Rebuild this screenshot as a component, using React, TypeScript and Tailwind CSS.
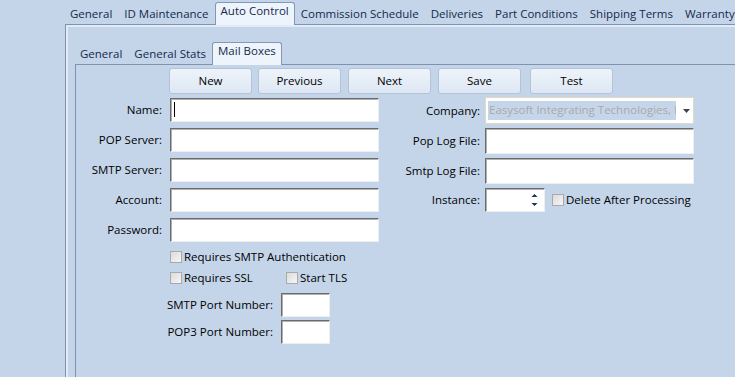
import React from "react";

const Tab = ({ label, active }: { label: string; active?: boolean }) =>
  active ? (
    <div className="relative z-10 -mb-px flex h-[23px] items-start rounded-t-[3px] border border-b-0 border-[#8497b4] bg-[#eef4fb] px-[5px] pt-[2px] text-[#15294b]">
      {label}
    </div>
  ) : (
    <div className="flex h-[21px] items-center px-[6px] text-[#15294b]">{label}</div>
  );

const Btn = ({ label, w, ml }: { label: string; w: string; ml: string }) => (
  <div
    className={`${w} ${ml} flex h-[26px] items-center justify-center rounded-[3px] border border-[#b4c3d8] bg-gradient-to-b from-[#eef3fa] to-[#dde7f4] text-black`}
  >
    {label}
  </div>
);

const Input = ({ w, h }: { w: string; h: string }) => (
  <div
    className={`${w} ${h} border border-t-[#6b6b6b] border-l-[#6b6b6b] border-b-[#eeeeee] border-r-[#eeeeee] bg-white shadow-[inset_1px_1px_0_#b0b0b0]`}
  />
);

const Check = ({ label, className = "" }: { label: string; className?: string }) => (
  <div className={`flex items-center ${className}`}>
    <div className="h-[12px] w-[12px] border border-[#a9a9a9] bg-gradient-to-br from-[#dcdcdc] to-[#f6f6f6]" />
    <span className="ml-[2px] text-black">{label}</span>
  </div>
);

export default function App() {
  const leftRows = ["Name:", "POP Server:", "SMTP Server:", "Account:", "Password:"];
  return (
    <div className="h-[377px] w-[735px] overflow-hidden bg-[#c4d5ea] font-['Open_Sans','Noto_Sans',sans-serif] text-[11.5px] leading-none">
      {/* outer tabs */}
      <div className="flex h-[24px] items-end whitespace-nowrap pl-[64px]">
        <Tab label="General" />
        <Tab label="ID Maintenance" />
        <Tab label="Auto Control" active />
        <Tab label="Commission Schedule" />
        <Tab label="Deliveries" />
        <Tab label="Part Conditions" />
        <Tab label="Shipping Terms" />
        <Tab label="Warranty" />
      </div>
      {/* outer panel */}
      <div className="ml-[65px] h-[353px] border-l border-t border-[#7f93b1] shadow-[inset_2px_2px_0_#e1eaf6]">
        <div className="flex h-[39px] items-end whitespace-nowrap pl-[8px]">
          <Tab label="General" />
          <Tab label="General Stats" />
          <Tab label="Mail Boxes" active />
        </div>
        {/* inner panel */}
        <div className="ml-[9px] h-[320px] border-l border-t border-[#7f93b1] pt-[3px]">
          <div className="flex">
            <Btn label="New" w="w-[83px]" ml="ml-[93px]" />
            <Btn label="Previous" w="w-[83px]" ml="ml-[6px]" />
            <Btn label="Next" w="w-[83px]" ml="ml-[7px]" />
            <Btn label="Save" w="w-[83px]" ml="ml-[7px]" />
            <Btn label="Test" w="w-[83px]" ml="ml-[9px]" />
          </div>
          <div className="flex">
            {/* left column */}
            <div className="flex flex-col pt-[4px]">
              {leftRows.map((l) => (
                <div key={l} className="mb-[6px] flex items-center">
                  <div className="w-[86px] text-right text-black">{l}</div>
                  <div className="ml-[8px]">
                    {l === "Name:" ? (
                      <div className="relative h-[24px] w-[209px] border border-t-[#6b6b6b] border-l-[#6b6b6b] border-b-[#eeeeee] border-r-[#eeeeee] bg-white shadow-[inset_1px_1px_0_#b0b0b0]">
                        <div className="absolute left-[3px] top-[3px] h-[15px] w-px bg-black" />
                      </div>
                    ) : (
                      <Input w="w-[209px]" h="h-[24px]" />
                    )}
                  </div>
                </div>
              ))}
              <div className="ml-[94px] mt-[1px] flex flex-col">
                <Check label="Requires SMTP Authentication" className="h-[16px]" />
                <div className="mt-[5px] flex h-[16px]">
                  <Check label="Requires SSL" className="w-[116px]" />
                  <Check label="Start TLS" />
                </div>
              </div>
              <div className="mt-[7px] flex items-center">
                <div className="w-[197px] text-right text-black">SMTP Port Number:</div>
                <div className="ml-[8px]">
                  <Input w="w-[49px]" h="h-[24px]" />
                </div>
              </div>
              <div className="mt-[3px] flex items-center">
                <div className="w-[197px] text-right text-black">POP3 Port Number:</div>
                <div className="ml-[8px]">
                  <Input w="w-[49px]" h="h-[24px]" />
                </div>
              </div>
            </div>
            {/* right column */}
            <div className="flex flex-col pt-[3px]">
              <div className="flex items-center">
                <div className="w-[101px] text-right text-black">Company:</div>
                <div className="ml-[5px] flex h-[27px] w-[209px] items-center border border-[#dedac6] bg-white pl-[2px]">
                  <div className="h-[19px] w-[188px] overflow-hidden whitespace-nowrap bg-[#c6d6ea] pl-[1px] pt-[3px] text-[#a9a9a9]">
                    Easysoft Integrating Technologies, Inc.
                  </div>
                  <svg width="7" height="4" className="ml-[7px]" viewBox="0 0 7 4">
                    <path d="M0 0 H7 L3.5 4 Z" fill="#444" />
                  </svg>
                </div>
              </div>
              <div className="mt-[4px] flex items-center">
                <div className="w-[101px] text-right text-black">Pop Log File:</div>
                <div className="ml-[5px]">
                  <Input w="w-[209px]" h="h-[26px]" />
                </div>
              </div>
              <div className="mt-[4px] flex items-center">
                <div className="w-[101px] text-right text-black">Smtp Log File:</div>
                <div className="ml-[5px]">
                  <Input w="w-[209px]" h="h-[26px]" />
                </div>
              </div>
              <div className="mt-[4px] flex items-center">
                <div className="w-[101px] text-right text-black">Instance:</div>
                <div className="ml-[5px] relative h-[24px] w-[60px] border border-t-[#6b6b6b] border-l-[#6b6b6b] border-b-[#eeeeee] border-r-[#eeeeee] bg-white shadow-[inset_1px_1px_0_#b0b0b0]">
                  <svg width="7" height="14" viewBox="0 0 7 14" className="absolute right-[6px] top-[4px]">
                    <path d="M0.5 4 L3.5 1 L6.5 4 Z" fill="#1e3050" />
                    <path d="M0.5 10 L3.5 13 L6.5 10 Z" fill="#1e3050" />
                  </svg>
                </div>
                <Check label="Delete After Processing" className="ml-[7px]" />
              </div>
            </div>
          </div>
        </div>
      </div>
    </div>
  );
}
